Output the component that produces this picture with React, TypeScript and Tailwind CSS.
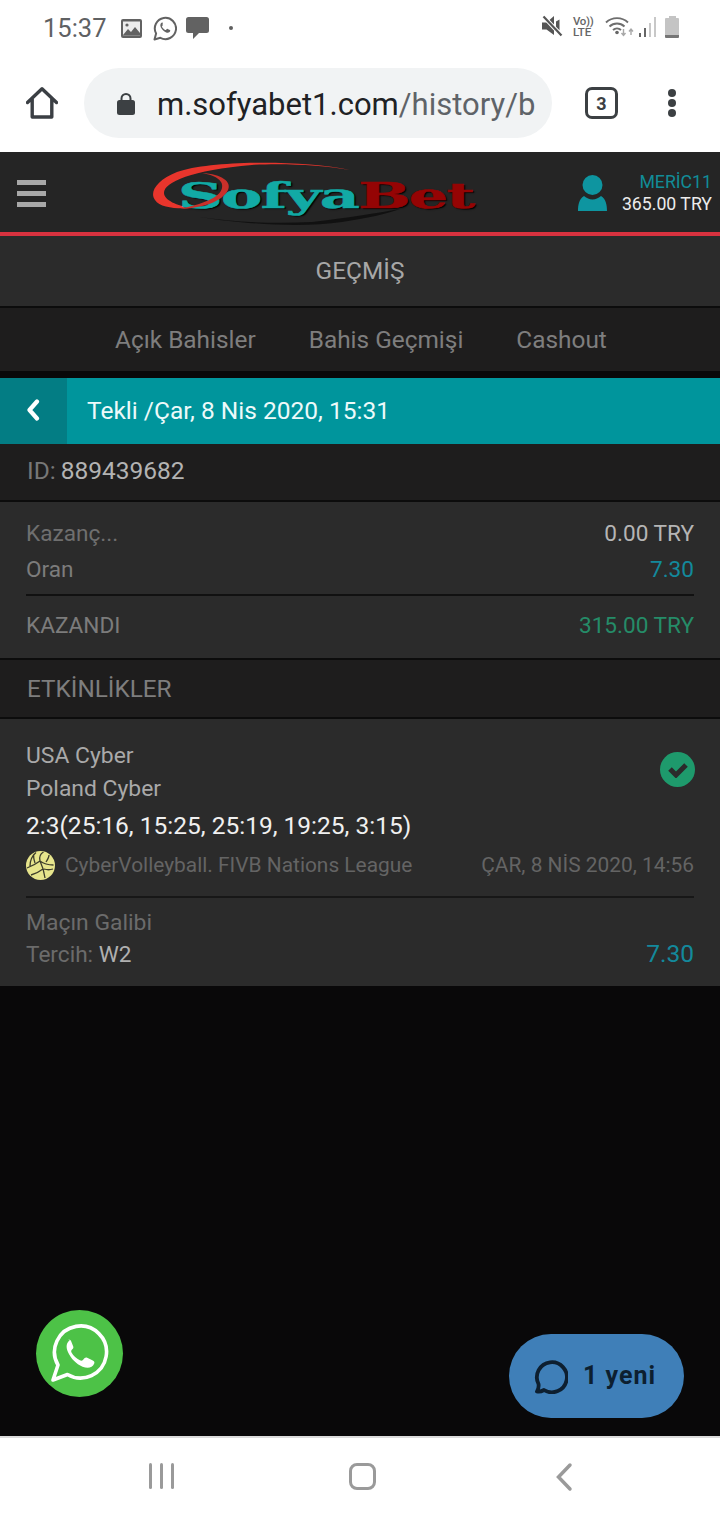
function StatusBar() {
  return (
    <div className="h-[56px] bg-white flex items-start justify-between pl-[43px] pr-[41px] pt-[15px]">
      <div className="flex items-center">
        <span className="text-[25.5px] leading-[26px] text-[#5f6163]">15:37</span>
        {/* picture */}
        <svg className="ml-[14px]" width="21" height="19" viewBox="0 0 21 19">
          <rect width="21" height="19" rx="2" fill="#626262" />
          <rect x="2" y="2.500" width="17" height="14" fill="#ededed" />
          <circle cx="6" cy="6" r="1.600" fill="#626262" />
          <path d="M2 16l5-6 3 3 4-5 5 6v2.500H2z" fill="#626262" />
        </svg>
        {/* whatsapp outline */}
        <svg className="ml-[11px]" width="24" height="25" viewBox="0 0 24 25" fill="none">
          <path d="M1.500 23.500l1.600-6A10.600 10.600 0 1 1 7.400 21.800z" stroke="#626262" strokeWidth="2" strokeLinejoin="round" />
          <path d="M8.600 6.800c-1.400 1-1.600 2.600-.8 4.400 1 2.200 3 4.300 5.400 5.200 1.800.6 3.400.2 4-1.300.3-.7-.1-1-.9-1.400l-1.700-.8c-.6-.2-.9.1-1.200.5-.4.6-.7.8-1.400.5-1.300-.6-2.300-1.600-3-2.800-.3-.5 0-.8.4-1.200.3-.4.4-.6.2-1.100L9.800 7.100c-.3-.6-.7-.6-1.200-.3z" fill="#626262" />
        </svg>
        {/* message */}
        <svg className="ml-[9px]" width="23" height="23" viewBox="0 0 23 23">
          <path d="M2.500 0h18A2.500 2.500 0 0 1 23 2.500v11a2.500 2.500 0 0 1-2.500 2.500H13l-6 6v-6H2.500A2.500 2.500 0 0 1 0 13.500v-11A2.500 2.500 0 0 1 2.500 0z" fill="#626262" />
        </svg>
        <span className="ml-[20px] w-[4px] h-[4px] rounded-full bg-[#5f5f5f]" />
      </div>
      <div className="flex items-center">
        {/* muted speaker */}
        <svg width="21" height="23" viewBox="0 0 21 23">
          <path d="M0 7.500h4.500L12 1v19l-7.500-5.500H0z" fill="#555" />
          <path d="M14 6.500l3.500-2v11l-3.500-3z" fill="#555" />
          <path d="M1.500 1.500l18 19" stroke="#fff" strokeWidth="4" />
          <path d="M1.500 1.500l18 19" stroke="#555" strokeWidth="2.200" />
        </svg>
        <div className="ml-[10px] w-[22px] flex flex-col text-[11.5px] leading-[11px] font-medium text-[#666]">
          <span className="h-[11px] tracking-[-0.3px]">Vo))</span>
          <span className="h-[11px]">LTE</span>
        </div>
        {/* wifi */}
        <svg className="ml-[10px]" width="29" height="21" viewBox="0 0 29 21" fill="none">
          <path d="M1 6.500a16 16 0 0 1 22 0M4.500 10.500a11 11 0 0 1 15 0M8 14a6 6 0 0 1 8 0" stroke="#6e6e6e" strokeWidth="1.900" />
          <circle cx="12" cy="16.500" r="1.800" fill="#666" />
          <path d="M18.500 13v6M16.500 17l2 2.500 2-2.500M26 19v-6M24 15.500l2-2.500 2 2.500" stroke="#a8a8a8" strokeWidth="1.400" />
        </svg>
        {/* signal */}
        <div className="ml-[5px] h-[21px] flex items-end gap-[3px]">
          <span className="w-[2px] h-[4px] bg-[#666]" />
          <span className="w-[2px] h-[9px] bg-[#666]" />
          <span className="w-[2px] h-[14px] bg-[#c8c8c8]" />
          <span className="w-[2px] h-[20px] bg-[#c8c8c8]" />
        </div>
        {/* battery */}
        <div className="ml-[9px] w-[14px] h-[22px] flex flex-col items-center">
          <span className="w-[7px] h-[2px] bg-[#c4c4c4]" />
          <span className="w-[14px] flex-1 rounded-t-[1px] bg-[#c4c4c4]" />
          <span className="w-[14px] h-[3px] rounded-b-[1px] bg-[#757575]" />
        </div>
      </div>
    </div>
  )
}

function BrowserBar() {
  return (
    <div className="h-[96px] bg-white flex items-start pt-[12px]">
      <div className="w-[84px] h-[70px] flex items-center justify-center">
        <svg width="32" height="32" viewBox="0 0 32 32" fill="none">
          <path d="M1.500 15.500L16 1.800l14.500 13.700M6.200 12v18h19.600V12" stroke="#3b3f44" strokeWidth="3.400" strokeLinejoin="round" strokeLinecap="round" />
        </svg>
      </div>
      <div className="w-[468px] h-[70px] rounded-full bg-[#f1f3f4] flex items-center pl-[33px]">
        <svg className="shrink-0" width="18" height="23" viewBox="0 0 18 23" fill="none">
          <path d="M4.500 10V6.500a4.500 4.500 0 0 1 9 0V10" stroke="#3c4043" strokeWidth="2" />
          <rect y="8" width="18" height="15" rx="2.500" fill="#3c4043" />
        </svg>
        <div className="ml-[22px] pt-[3px] whitespace-nowrap text-[31px] leading-[40px] text-[#202124]">
          m.sofyabet1.com<span className="text-[#5f6368]">/history/b</span>
        </div>
      </div>
      <div className="w-[33px] h-[32px] ml-[33px] mt-[19px] border-[3.500px] border-[#3c4043] rounded-[7px] flex items-center justify-center text-[18px] font-bold text-[#3c4043]">
        3
      </div>
      <div className="ml-[50px] mt-[21px] flex flex-col gap-[2px] items-center">
        <span className="w-[8px] h-[8px] rounded-full bg-[#3c4043]" />
        <span className="w-[8px] h-[8px] rounded-full bg-[#3c4043]" />
        <span className="w-[8px] h-[8px] rounded-full bg-[#3c4043]" />
      </div>
    </div>
  )
}

function Logo() {
  return (
    <div className="relative w-[326px] h-[66px]">
      <svg className="absolute inset-0" width="326" height="66" viewBox="0 0 326 66" fill="none">
        <path d="M198 8C150-2 60-2 25 10C5 18-3 30 3 38C8 46 25 47 40 46C25 44 12 38 12 31C12 20 40 8 100 3C130 1 170 3 198 8z" fill="#e8352c" />
        <path d="M48 55C90 62 150 66 190 60C215 56 235 52 248 47C225 51 195 56 160 60C120 62 80 60 48 55z" fill="#111" />
      </svg>
      <div className="absolute left-[26px] top-[11px] whitespace-nowrap font-['DejaVu_Serif',serif] font-bold text-[36px] leading-[44px] tracking-[-1px] origin-left scale-x-[1.72] [-webkit-text-stroke:0.5px] [text-shadow:1px_1px_1px_#000]">
        <span className="text-[#12aaa5]">Sofya</span>
        <span className="text-[#950404]">Bet</span>
      </div>
      {/* red curl crosses over the S */}
      <svg className="absolute inset-0" width="326" height="66" viewBox="0 0 326 66" fill="none">
        <path d="M50 11C70 12 80 20 76 28C70 40 50 46 28 47C50 42 68 36 70 26C72 18 62 13 50 11z" fill="#c9302a" />
      </svg>
    </div>
  )
}

function Header() {
  return (
    <div className="h-[84px] bg-[#252525] border-b-[4px] border-[#d8323f] flex items-start">
      <div className="w-[152px] pl-[17px] pt-[28px] flex flex-col gap-[6px]">
        <span className="w-[29px] h-[5px] bg-[#a8a8a8]" />
        <span className="w-[29px] h-[5px] bg-[#a8a8a8]" />
        <span className="w-[29px] h-[5px] bg-[#a8a8a8]" />
      </div>
      <div className="pt-[10px]">
        <Logo />
      </div>
      <svg className="ml-[100px] mt-[23px]" width="29" height="36" viewBox="0 0 29 36">
        <circle cx="14.500" cy="10" r="10" fill="#0e95a0" />
        <path d="M0 36C0 30 1 24 6 21C9 23 11 24.500 14.500 24.500C18 24.500 20 23 23 21C28 24 29 30 29 36C20 37 9 37 0 36z" fill="#0e95a0" />
      </svg>
      <div className="ml-[14px] pt-[19px] flex-1 pr-[8px] flex flex-col items-end text-[17.7px] leading-[22px] whitespace-nowrap">
        <span className="text-[#118c98]">MERİC11</span>
        <span className="text-[#ececec]">365.00 TRY</span>
      </div>
    </div>
  )
}

function App() {
  return (
    <div className="relative w-[720px] h-[1520px] bg-[#090809] flex flex-col overflow-hidden font-['Roboto',sans-serif]">
      <StatusBar />
      <BrowserBar />
      <Header />

      <div className="h-[72px] bg-[#2b2b2b] border-b-[2px] border-[#0c0c0c] flex items-center justify-center text-[24.4px] text-[#a7a7a7]">
        GEÇMİŞ
      </div>
      <div className="h-[63px] bg-[#1e1d1d] flex items-center pl-[115px] pt-[2px] text-[24.4px] text-[#7e7e7e]">
        <span>Açık Bahisler</span>
        <span className="ml-[53px]">Bahis Geçmişi</span>
        <span className="ml-[53px]">Cashout</span>
      </div>

      <div className="mt-[7px] h-[66px] bg-[#00959c] flex items-center">
        <div className="w-[67px] h-full bg-[#037d84] flex items-center justify-center">
          <svg className="-ml-[1px] -mt-[2px]" width="14" height="22" viewBox="0 0 14 22" fill="none">
            <path d="M11 2.500L3.500 11 11 19.500" stroke="#fff" strokeWidth="4.200" strokeLinejoin="round" strokeLinecap="round" />
          </svg>
        </div>
        <span className="ml-[20px] text-[24.5px] text-[#edfafa]">Tekli /Çar, 8 Nis 2020, 15:31</span>
      </div>

      <div className="h-[58px] bg-[#1e1d1d] border-b-[2px] border-[#0c0c0c] flex items-center pl-[27px] text-[24.5px] pb-[1px]">
        <span className="text-[#777]">ID:</span>
        <span className="ml-[5px] text-[#b3b3b3]">889439682</span>
      </div>

      <div className="h-[158px] bg-[#2b2b2b] border-b-[2px] border-[#0c0c0c] px-[26px] pt-[15px]">
        <div className="h-[33px] flex items-center justify-between text-[22.6px]">
          <span className="text-[#6f6f6f]">Kazanç...</span>
          <span className="text-[#b5b5b5]">0.00 TRY</span>
        </div>
        <div className="h-[46px] flex items-center justify-between text-[22.6px] border-b-[2px] border-[#111] pb-[5px]">
          <span className="text-[#7c7c7c]">Oran</span>
          <span className="text-[#13899c]">7.30</span>
        </div>
        <div className="h-[60px] flex items-center justify-between text-[22.6px]">
          <span className="text-[#7c7c7c]">KAZANDI</span>
          <span className="text-[#258c68]">315.00 TRY</span>
        </div>
      </div>

      <div className="h-[59px] bg-[#1e1d1d] border-b-[2px] border-[#0c0c0c] flex items-center pl-[27px] pt-[2px] text-[24.3px] text-[#7e7e7e]">
        ETKİNLİKLER
      </div>

      <div className="h-[267px] bg-[#2b2b2b] px-[26px] pt-[20px]">
        <div className="flex justify-between items-start">
          <div className="flex flex-col">
            <span className="h-[33px] leading-[33px] text-[22.9px] text-[#a9a9a9]">USA Cyber</span>
            <span className="h-[33px] leading-[33px] text-[22.9px] text-[#a9a9a9]">Poland Cyber</span>
            <span className="h-[42px] leading-[42px] text-[24.5px] text-[#f0f0f0]">2:3(25:16, 15:25, 25:19, 19:25, 3:15)</span>
          </div>
          <div className="mt-[13px] mr-[-1px] w-[35px] h-[35px] rounded-full bg-[#1e9a6c] flex items-center justify-center">
            <svg width="22" height="17" viewBox="0 0 22 17" fill="none">
              <path d="M3 8l6 6 10-10" stroke="#2b2b2b" strokeWidth="5" />
            </svg>
          </div>
        </div>
        <div className="h-[38px] flex items-center justify-between text-[20.9px] text-[#646464]">
          <div className="flex items-center">
            <svg width="29" height="29" viewBox="0 0 29 29" fill="none">
              <circle cx="14.500" cy="14.500" r="14.500" fill="#e7e58c" />
              <path d="M10 1.500C6 5 4 9 4 15M17.500 1C14 3 13 6 14 10M14 10C18 13 23 14 27.500 14M14 10C10 13 6 15 1 17M14 10C16 14 18 20 19 27M8 3C7 6 8 9 9 12M20 11C22 8 23 6 23 4M17 18C13 21 9 23 5 24M18 18C21 19 24 19 27 18" stroke="#3d3d2b" strokeWidth="1.300" />
            </svg>
            <span className="ml-[10px]">CyberVolleyball. FIVB Nations League</span>
          </div>
          <span>ÇAR, 8 NİS 2020, 14:56</span>
        </div>
        <div className="mt-[11px] border-t-[2px] border-[#171717] pt-[9px]">
          <div className="h-[31px] leading-[31px] text-[22.9px] text-[#6b6b6b]">Maçın Galibi</div>
          <div className="h-[32px] pt-[1px] flex items-center justify-between">
            <span className="text-[22.6px]">
              <span className="text-[#6b6b6b]">Tercih: </span>
              <span className="text-[#b0b0b0]">W2</span>
            </span>
            <span className="text-[#13899c] text-[24.5px]">7.30</span>
          </div>
        </div>
      </div>

      <div className="flex-1 relative">
        {/* whatsapp button */}
        <div className="absolute left-[36px] top-[324px] w-[87px] h-[87px] rounded-full bg-[#4dc247] flex items-center justify-center">
          <svg width="60" height="60" viewBox="0 0 60 60" fill="none">
            <path d="M3 56L8 41A26 26 0 1 1 17.500 50.500z" stroke="#fff" strokeWidth="3.600" strokeLinejoin="round" />
            <g transform="translate(-4,-2.500) scale(1.160)">
              <path d="M20.500 16c-3 2.500-3.500 6-1.500 10.500 2.500 5.500 7 10 12.500 12.500 4.500 1.800 8.500 1 10-2.500.8-1.800-.2-2.500-2-3.300l-4-2c-1.500-.6-2.200.2-3 1.200-.9 1.300-1.700 1.800-3.300 1-3-1.500-5.500-3.800-7.200-6.700-.7-1.200 0-1.900.9-2.900.7-.9.9-1.400.5-2.500l-1.800-4.400c-.6-1.500-1.700-1.500-2.600-.9z" fill="#fff" />
            </g>
          </svg>
        </div>
        {/* chat pill */}
        <div className="absolute left-[509px] top-[348px] w-[175px] h-[84px] rounded-full bg-[#3f7fb8] flex items-center pl-[25px]">
          <svg width="34" height="36" viewBox="0 0 34 36" fill="none">
            <path d="M3 33.500c3 .8 5-.3 7-1.500A15 15 0 1 0 4.500 26c.4 2.500 0 5-1.500 7.500z" stroke="#0d1f30" strokeWidth="3.800" strokeLinejoin="round" />
          </svg>
          <span className="ml-[15px] text-[25px] font-bold text-[#0d1f30] tracking-[1px]">1 yeni</span>
        </div>
      </div>

      <div className="h-[84px] bg-white border-t-[2px] border-[#dcdcdc] flex items-start">
        <div className="ml-[149px] mt-[25px] flex gap-[8px]">
          <span className="w-[3px] h-[26px] rounded-full bg-[#9a9a9a]" />
          <span className="w-[3px] h-[26px] rounded-full bg-[#9a9a9a]" />
          <span className="w-[3px] h-[26px] rounded-full bg-[#9a9a9a]" />
        </div>
        <div className="ml-[175px] mt-[25px] w-[27px] h-[27px] rounded-[8px] border-[3.500px] border-[#9a9a9a]" />
        <svg className="ml-[179px] mt-[24px]" width="18" height="30" viewBox="0 0 18 30" fill="none">
          <path d="M15 3L3.500 15 15 27" stroke="#9a9a9a" strokeWidth="3.500" strokeLinecap="round" />
        </svg>
      </div>
    </div>
  )
}

export default App
